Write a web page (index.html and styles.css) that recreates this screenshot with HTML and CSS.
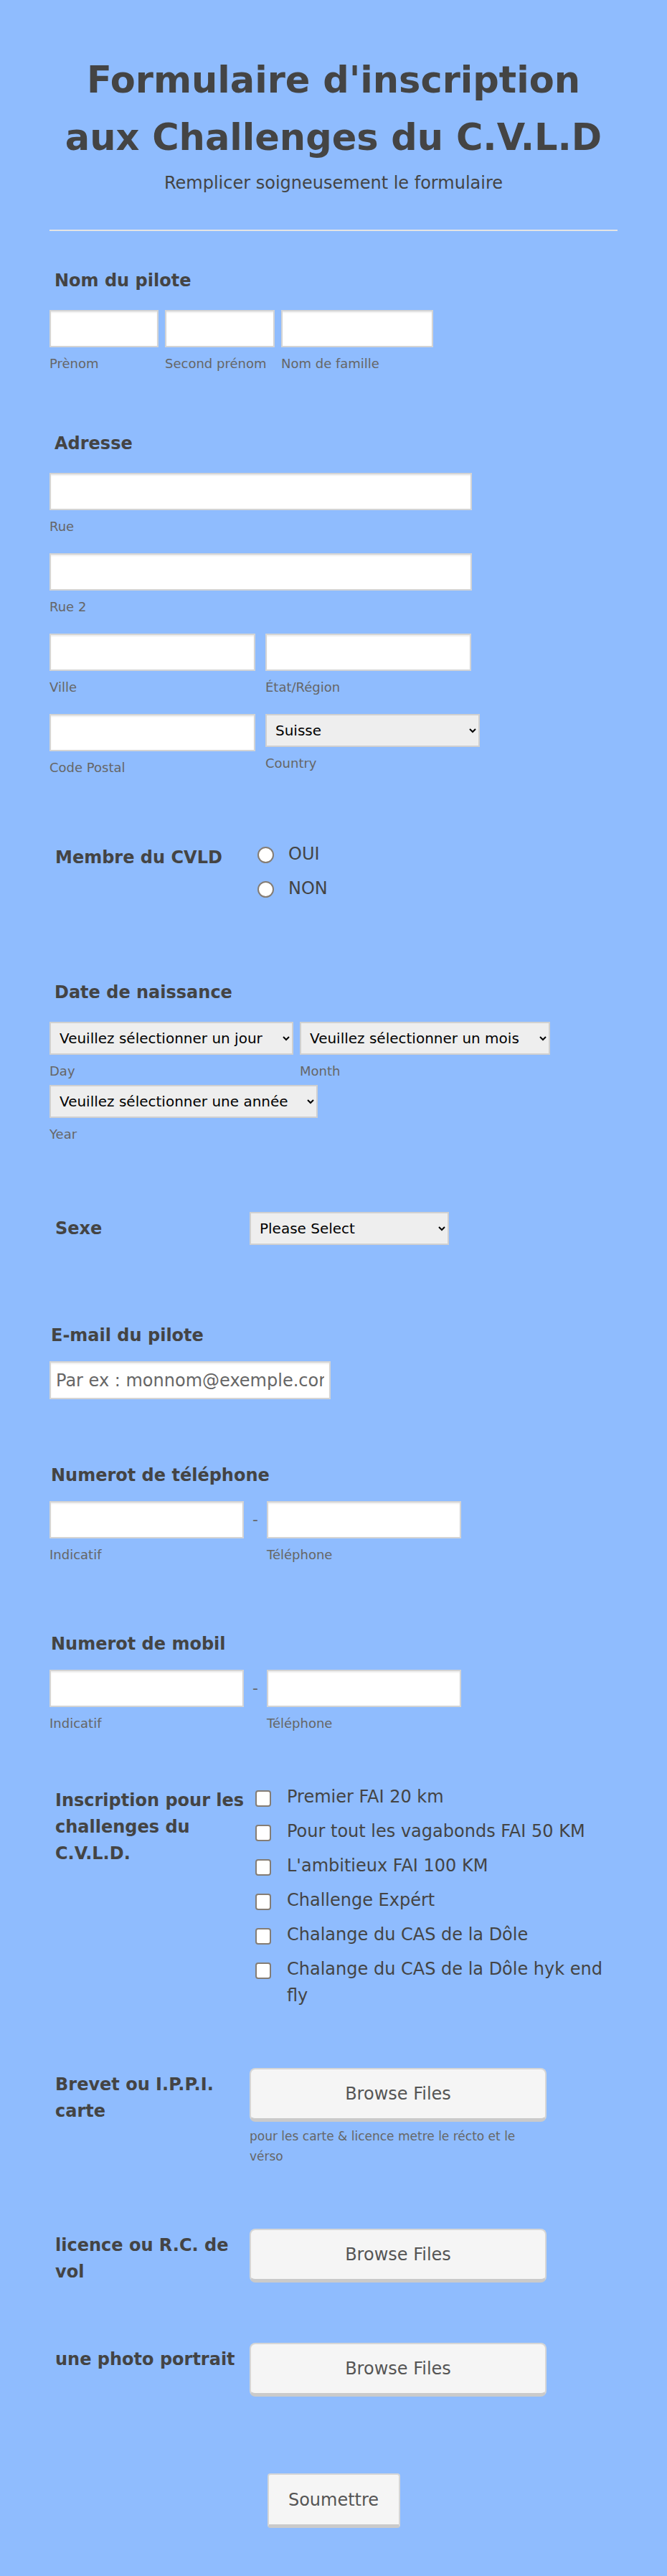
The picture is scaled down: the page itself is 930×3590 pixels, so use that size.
FILE: index.html
```html
<!DOCTYPE html>
<html lang="fr">
<head>
    <meta charset="UTF-8">
    <meta name="viewport" content="width=device-width, initial-scale=1.0">
    <title>Formulaire d'inscription aux Challenges du C.V.L.D</title>
    <link rel="stylesheet" href="styles.css">
</head>
<body>
    <div class="container">
        <div class="header">
            <h1>Formulaire d'inscription<br>aux Challenges du C.V.L.D</h1>
            <p class="subheader">Remplicer soigneusement le formulaire</p>
        </div>
        <div class="divider"></div>

        <form id="form">
            <!-- nom -->
            <div class="field field-name">
                <label class="label">Nom du pilote</label>
                <div class="row">
                    <div class="sub w-first"><input type="text"><span class="sublabel">Prènom</span></div>
                    <div class="sub w-middle"><input type="text"><span class="sublabel">Second prénom</span></div>
                    <div class="sub w-last"><input type="text"><span class="sublabel">Nom de famille</span></div>
                </div>
            </div>

            <!-- adresse -->
            <div class="field field-address">
                <label class="label">Adresse</label>
                <div class="address">
                    <div class="sub w-full"><input type="text"><span class="sublabel">Rue</span></div>
                    <div class="sub w-full"><input type="text"><span class="sublabel">Rue 2</span></div>
                    <div class="row row-wide">
                        <div class="sub w-half"><input type="text"><span class="sublabel">Ville</span></div>
                        <div class="sub w-half"><input type="text"><span class="sublabel">État/Région</span></div>
                    </div>
                    <div class="row row-wide">
                        <div class="sub w-half"><input type="text"><span class="sublabel">Code Postal</span></div>
                        <div class="sub w-country">
                            <select>
                                <option>Suisse</option>
                                <option>France</option>
                                <option>Italie</option>
                                <option>Allemagne</option>
                            </select>
                            <span class="sublabel">Country</span>
                        </div>
                    </div>
                </div>
            </div>

            <!-- membre -->
            <div class="field side field-membre">
                <label class="side-label">Membre du CVLD</label>
                <div class="options">
                    <label class="option"><input type="radio" name="membre" class="radio"><span>OUI</span></label>
                    <label class="option"><input type="radio" name="membre" class="radio"><span>NON</span></label>
                </div>
            </div>

            <!-- naissance -->
            <div class="field field-birth">
                <label class="label">Date de naissance</label>
                <div class="row">
                    <div class="sub w-day">
                        <select><option>Veuillez sélectionner un jour</option></select>
                        <span class="sublabel">Day</span>
                    </div>
                    <div class="sub w-month">
                        <select><option>Veuillez sélectionner un mois</option></select>
                        <span class="sublabel">Month</span>
                    </div>
                </div>
                <div class="sub w-year year">
                    <select><option>Veuillez sélectionner une année</option></select>
                    <span class="sublabel">Year</span>
                </div>
            </div>

            <!-- sexe -->
            <div class="field side field-sexe">
                <label class="side-label">Sexe</label>
                <div>
                    <select class="select-sexe">
                        <option>Please Select</option>
                        <option>Homme</option>
                        <option>Femme</option>
                    </select>
                </div>
            </div>

            <!-- email -->
            <div class="field field-email">
                <label class="label label-tight">E-mail du pilote</label>
                <input type="email" class="input-email" placeholder="Par ex : monnom@exemple.com">
            </div>

            <!-- telephone -->
            <div class="field field-phone">
                <label class="label label-tight">Numerot de téléphone</label>
                <div class="row row-phone">
                    <div class="sub w-phone"><input type="text"><span class="sublabel">Indicatif</span></div>
                    <span class="dash">-</span>
                    <div class="sub w-phone"><input type="text"><span class="sublabel">Téléphone</span></div>
                </div>
            </div>

            <!-- mobil -->
            <div class="field field-mobil">
                <label class="label label-tight">Numerot de mobil</label>
                <div class="row row-phone">
                    <div class="sub w-phone"><input type="text"><span class="sublabel">Indicatif</span></div>
                    <span class="dash">-</span>
                    <div class="sub w-phone"><input type="text"><span class="sublabel">Téléphone</span></div>
                </div>
            </div>

            <!-- challenges -->
            <div class="field side field-challenges">
                <label class="side-label">Inscription pour les challenges du C.V.L.D.</label>
                <div class="options options-wide">
                    <label class="option"><input type="checkbox" class="check"><span>Premier FAI 20 km</span></label>
                    <label class="option"><input type="checkbox" class="check"><span>Pour tout les vagabonds FAI 50 KM</span></label>
                    <label class="option"><input type="checkbox" class="check"><span>L'ambitieux FAI 100 KM</span></label>
                    <label class="option"><input type="checkbox" class="check"><span>Challenge Expért</span></label>
                    <label class="option"><input type="checkbox" class="check"><span>Chalange du CAS de la Dôle</span></label>
                    <label class="option"><input type="checkbox" class="check"><span>Chalange du CAS de la Dôle hyk end fly</span></label>
                </div>
            </div>

            <!-- fichiers -->
            <div class="field side field-brevet">
                <label class="side-label">Brevet ou I.P.P.I. carte</label>
                <div class="upload">
                    <button type="button" class="browse">Browse Files</button>
                    <p class="hint">pour les carte &amp; licence metre le récto et le vérso</p>
                </div>
            </div>

            <div class="field side field-licence">
                <label class="side-label">licence ou R.C. de vol</label>
                <div class="upload">
                    <button type="button" class="browse">Browse Files</button>
                </div>
            </div>

            <div class="field side field-photo">
                <label class="side-label">une photo portrait</label>
                <div class="upload">
                    <button type="button" class="browse">Browse Files</button>
                </div>
            </div>

            <div class="submit-row">
                <button type="submit" class="submit">Soumettre</button>
            </div>
        </form>
    </div>
</body>
</html>
```

FILE: styles.css
```css
body {
    font-family: "DejaVu Sans", Verdana, sans-serif;
    background-color: #8fbcfe;
    margin: 0;
    padding: 0 0 67px;
    color: #444;
}

.container {
    width: 792px;
    margin: 0 auto;
}

.header {
    text-align: center;
    padding-top: 72px;
}

h1 {
    margin: 0;
    font-size: 51px;
    line-height: 80px;
    font-weight: 700;
    color: #444;
}

.subheader {
    margin: 8px 0 0;
    font-size: 24px;
    line-height: 30px;
    color: #444;
}

.divider {
    height: 2px;
    background-color: #e4e4e4;
    margin-top: 50px;
}

/* fields */

.field {
    margin-top: 82px;
}

.field-name { margin-top: 51px; }
.field-membre { margin-top: 91px; }
.field-birth { margin-top: 108px; }
.field-sexe { margin-top: 97px; }
.field-email { margin-top: 108px; }
.field-phone { margin-top: 88px; }
.field-mobil { margin-top: 95px; }
.field-challenges { margin-top: 73px; }
.field-licence { margin-top: 87px; }
.field-photo { margin-top: 80px; }

.label {
    display: block;
    font-size: 24px;
    line-height: 37px;
    font-weight: 700;
    padding-left: 7px;
    margin-bottom: 22px;
}

.label-tight {
    padding-left: 2px;
    margin-bottom: 17px;
}

.row {
    display: flex;
    gap: 9px;
}

.row-wide {
    gap: 14px;
}

.row-phone {
    gap: 0;
}

.address {
    display: flex;
    flex-direction: column;
    gap: 26px;
}

.sub {
    display: flex;
    flex-direction: column;
}

.w-first { width: 152px; }
.w-middle { width: 153px; }
.w-last { width: 212px; }
.w-full { width: 589px; }
.w-half { width: 287px; }
.w-country { width: 299px; }
.w-day { width: 340px; }
.w-month { width: 349px; }
.w-year { width: 374px; }
.w-phone { width: 271px; }

.year {
    margin-top: 8px;
}

input[type="text"], input[type="email"] {
    box-sizing: border-box;
    width: 100%;
    height: 52px;
    border: 2px solid #d4d4d4;
    background-color: #fff;
    box-shadow: inset 0 2px 2px rgba(0, 0, 0, 0.07);
    padding: 0 7px;
    font-family: "DejaVu Sans", sans-serif;
    font-size: 24px;
    color: #333;
    margin: 0;
}

.input-email {
    width: 392px !important;
    height: 53px !important;
}

.input-email::placeholder {
    color: #666;
}

select {
    box-sizing: border-box;
    width: 100%;
    height: 46px;
    border: 2px solid #d0d0d0;
    background-color: #eee;
    font-family: "DejaVu Sans", sans-serif;
    font-size: 20px;
    color: #000;
    padding: 0 6px 0 8px;
    margin: 0;
}

.sublabel {
    display: block;
    margin-top: 12px;
    font-size: 18px;
    line-height: 22px;
    color: #666;
}

.dash {
    width: 32px;
    text-align: center;
    font-size: 22px;
    line-height: 52px;
    color: #666;
}

/* side label fields */

.side {
    display: flex;
}

.side-label {
    box-sizing: border-box;
    width: 279px;
    flex-shrink: 0;
    padding: 5px 0 0 8px;
    font-size: 24px;
    line-height: 37px;
    font-weight: 700;
}

.options {
    display: flex;
    flex-direction: column;
    gap: 11px;
}

.options-wide {
    flex: 1;
}

.option {
    display: flex;
    align-items: flex-start;
    font-size: 24px;
    line-height: 37px;
    color: #444;
}

.radio, .check {
    appearance: none;
    flex-shrink: 0;
    background-color: #fff;
    border: 2px solid #857d74;
    margin: 8px 20px 0 11px;
}

.radio {
    width: 23px;
    height: 23px;
    border-radius: 50%;
}

.check {
    width: 22px;
    height: 23px;
    border-radius: 4px;
    margin: 9px 22px 0 8px;
}

.select-sexe {
    width: 278px;
}

.upload {
    width: 414px;
}

.browse, .submit {
    box-sizing: border-box;
    display: block;
    width: 414px;
    height: 75px;
    background-color: #f5f5f5;
    border: 2px solid #d6d6d6;
    border-bottom: 5px solid #cacaca;
    border-radius: 8px;
    font-family: "DejaVu Sans", sans-serif;
    font-size: 24px;
    color: #555;
    cursor: pointer;
}

.hint {
    margin: 6px 0 0;
    font-size: 17px;
    line-height: 28px;
    color: #666;
}

.submit-row {
    margin-top: 107px;
    text-align: center;
}

.submit {
    display: inline-block;
    width: 185px;
    height: 76px;
    border-radius: 4px;
}
```
